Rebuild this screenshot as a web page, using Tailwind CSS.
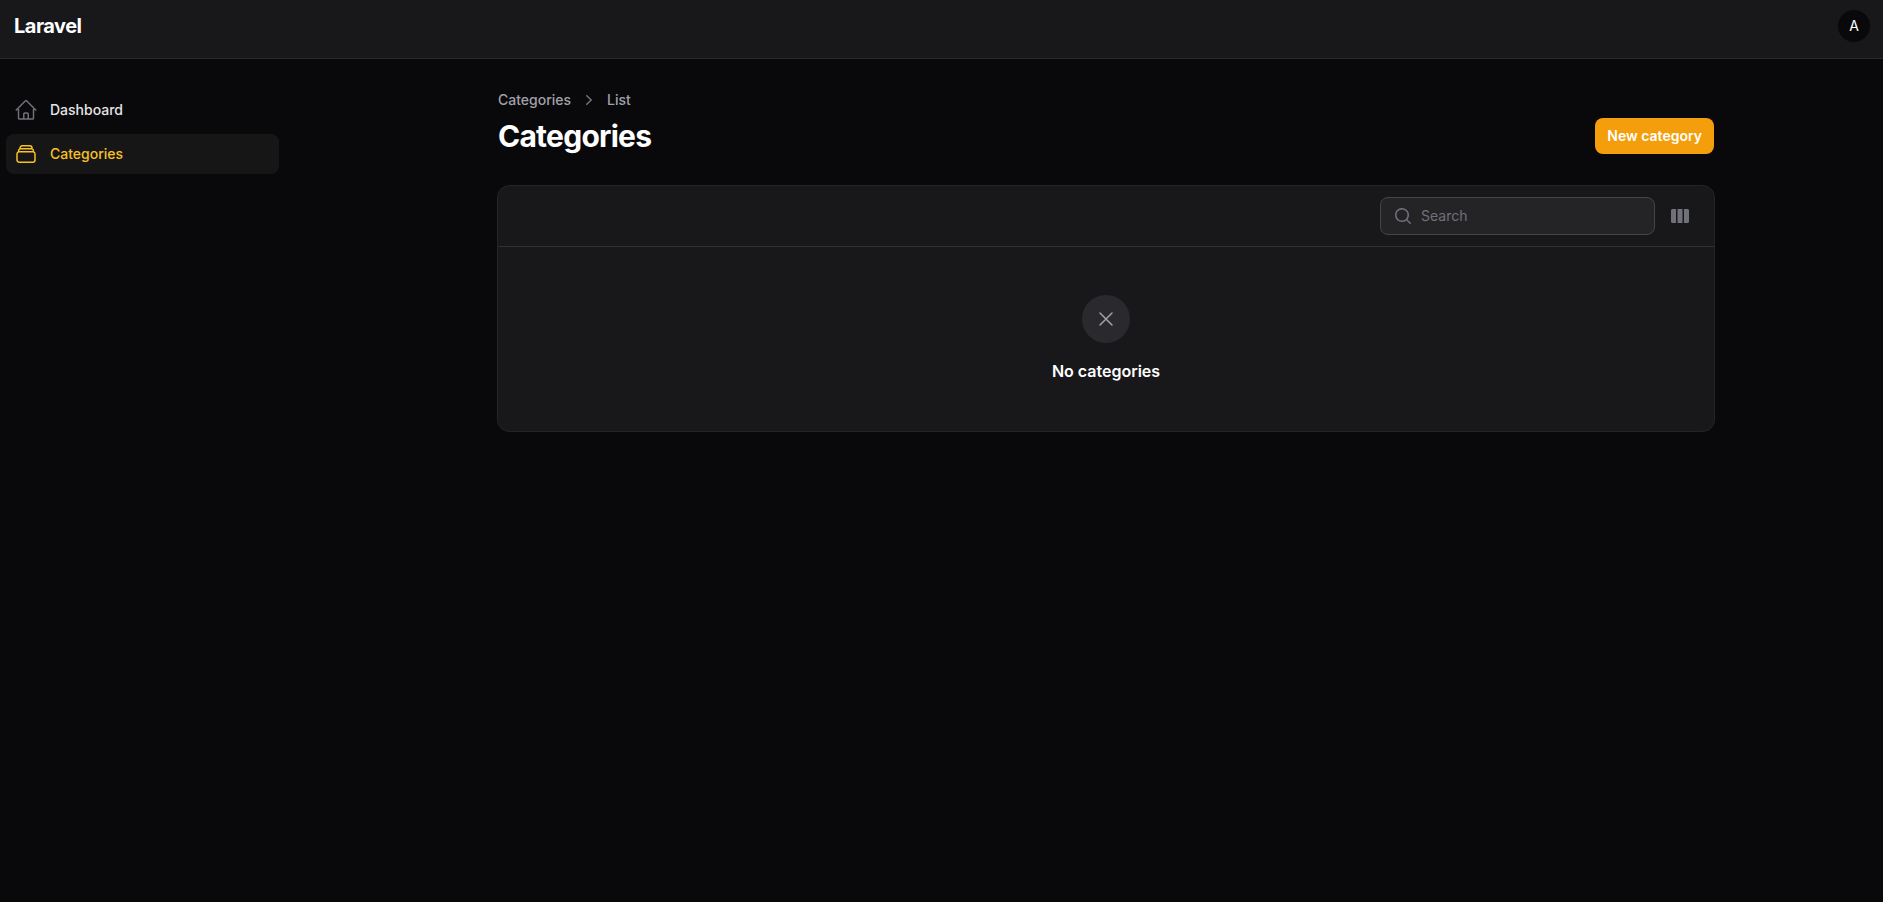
<!DOCTYPE html>
<html lang="en">
<head>
<meta charset="utf-8">
<meta name="viewport" content="width=device-width, initial-scale=1">
<title>Categories - Laravel</title>
<script src="https://cdn.jsdelivr.net/npm/@tailwindcss/browser@4"></script>
</head>
<body class="flex min-h-screen flex-col bg-[#09090b] font-['Inter',sans-serif] text-sm text-white antialiased">
<header class="flex h-[59px] items-start justify-between border-b border-[#2a2a2c] bg-[#18181b] pr-[13px] pl-3.5">
  <a href="#" class="mt-3 text-xl leading-7 font-bold tracking-tight">Laravel</a>
  <button type="button" aria-label="User menu" class="mt-2.5 flex size-8 items-center justify-center rounded-full bg-[#09090b] text-sm">A</button>
</header>
<div class="flex flex-1">
  <nav class="w-[329px] shrink-0 pt-[31px] pr-[50px] pl-1.5">
    <ul class="flex flex-col gap-1">
      <li><a href="#" class="flex items-center gap-3 rounded-lg p-2 font-medium text-[#e4e4e7]">
        <svg class="size-6 text-[#71717a]" viewBox="0 0 24 24" fill="none" stroke="currentColor" stroke-width="1.5" stroke-linecap="round" stroke-linejoin="round"><path d="m2.25 12 8.954-8.955c.44-.439 1.152-.439 1.591 0L21.75 12M4.5 9.75v10.125c0 .621.504 1.125 1.125 1.125H9.75v-4.875c0-.621.504-1.125 1.125-1.125h2.25c.621 0 1.125.504 1.125 1.125V21h4.125c.621 0 1.125-.504 1.125-1.125V9.75M8.25 21h8.25"/></svg>
        Dashboard</a></li>
      <li><a href="#" aria-current="page" class="flex items-center gap-3 rounded-lg bg-[#161617] p-2 font-medium text-[#f8c127]">
        <svg class="size-6" viewBox="0 0 24 24" fill="none" stroke="currentColor" stroke-width="1.5" stroke-linecap="round" stroke-linejoin="round"><path d="M6 6.878V6a2.25 2.25 0 0 1 2.25-2.25h7.5A2.25 2.25 0 0 1 18 6v.878m-12 0c.235-.083.487-.128.75-.128h10.5c.263 0 .515.045.75.128m-12 0A2.25 2.25 0 0 0 4.5 9v.878m13.5-3A2.25 2.25 0 0 1 19.5 9v.878m0 0a2.246 2.246 0 0 0-.75-.128H5.25c-.263 0-.515.045-.75.128m15 0A2.25 2.25 0 0 1 21 12v6a2.25 2.25 0 0 1-2.25 2.25H5.25A2.25 2.25 0 0 1 3 18v-6c0-.98.626-1.813 1.5-2.122"/></svg>
        Categories</a></li>
    </ul>
  </nav>
  <main class="mx-auto w-full max-w-7xl px-8 pt-[31px] pb-8">
    <div class="flex items-end justify-between">
      <div>
        <nav aria-label="Breadcrumb" class="mb-2 flex items-center gap-2 font-medium text-[#a1a1aa]">
          <a href="#">Categories</a>
          <svg class="size-5 text-[#71717a]" viewBox="0 0 20 20" fill="currentColor"><path fill-rule="evenodd" d="M7.21 14.77a.75.75 0 0 1 .02-1.06L11.168 10 7.23 6.29a.75.75 0 1 1 1.04-1.08l4.5 4.25a.75.75 0 0 1 0 1.08l-4.5 4.25a.75.75 0 0 1-1.06-.02Z"/></svg>
          <span>List</span>
        </nav>
        <h1 class="text-3xl font-bold tracking-tight">Categories</h1>
      </div>
      <button type="button" class="rounded-lg bg-[#f59e0b] px-3 py-2 font-semibold">New category</button>
    </div>
    <section class="mt-8 rounded-xl bg-[#18181b] ring-1 ring-[#242427]">
      <div class="flex items-center justify-end gap-[15px] border-b border-[#313134] py-[11px] pr-6">
        <div class="flex h-[38px] w-[275px] items-center gap-2 rounded-lg border border-[#454548] bg-[#242427] px-3">
          <svg class="size-5 shrink-0 text-[#71717a]" viewBox="0 0 20 20" fill="currentColor"><path fill-rule="evenodd" d="M9 3.5a5.5 5.5 0 1 0 0 11 5.5 5.5 0 0 0 0-11ZM2 9a7 7 0 1 1 12.452 4.391l3.328 3.329a.75.75 0 1 1-1.06 1.06l-3.329-3.328A7 7 0 0 1 2 9Z"/></svg>
          <input type="search" aria-label="Search" placeholder="Search" class="w-full min-w-0 bg-transparent outline-none placeholder:text-[#71717a]">
        </div>
        <button type="button" aria-label="Toggle columns" class="text-[#71717a]">
          <svg class="size-5" viewBox="0 0 20 20" fill="currentColor"><path d="M14 17h3.500A1.500 1.500 0 0 0 19 15.500v-11A1.500 1.500 0 0 0 17.500 3H14v14ZM12.500 3h-5v14h5V3ZM2.500 3H6v14H2.500A1.500 1.500 0 0 1 1 15.500v-11A1.500 1.500 0 0 1 2.500 3Z"/></svg>
        </button>
      </div>
      <div class="flex flex-col items-center px-6 py-12">
        <div class="mb-4 flex size-12 items-center justify-center rounded-full bg-[#2a2a2e] text-[#a1a1aa]">
          <svg class="size-6" viewBox="0 0 24 24" fill="none" stroke="currentColor" stroke-width="1.5" stroke-linecap="round"><path d="M6 18 18 6M6 6l12 12"/></svg>
        </div>
        <h2 class="text-base leading-6 font-semibold">No categories</h2>
      </div>
    </section>
  </main>
</div>
</body>
</html>
